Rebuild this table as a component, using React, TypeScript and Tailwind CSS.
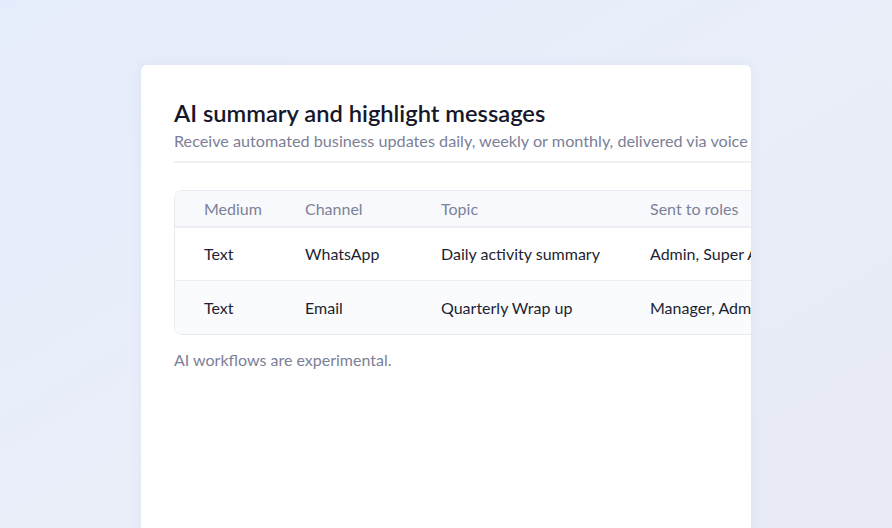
export default function App() {
  const rows = [
    { medium: "Text", channel: "WhatsApp", topic: "Daily activity summary", roles: "Admin, Super Admin", bg: "bg-white" },
    { medium: "Text", channel: "Email", topic: "Quarterly Wrap up", roles: "Manager, Admin", bg: "bg-[#fafbfd]" },
  ];
  return (
    <div
      className="w-[892px] h-[528px] overflow-hidden bg-gradient-to-br from-[#e5ecfb] via-[#e9eef9] to-[#e8eaf5] pt-[65px] pl-[141px]"
      style={{ fontFamily: "Lato, 'Noto Sans', sans-serif" }}
    >
      <div className="w-[610px] h-[480px] bg-white rounded-[6px] overflow-hidden pl-[33px] pt-[33px] shadow-[0_0_12px_rgba(120,130,180,0.08)]">
        <div className="w-[900px]">
          <h1 className="text-[23.7px] leading-[30px] font-semibold text-[#15172b] whitespace-nowrap">
            AI summary and highlight messages
          </h1>
          <p className="mt-[1px] text-[16.2px] leading-[24px] text-[#7b8098] whitespace-nowrap">
            Receive automated business updates daily, weekly or monthly, delivered via voice
          </p>
          <div className="mt-[8px] h-[2px] bg-[#eef0f4] w-[600px]" />
          <div className="mt-[27px] w-[720px] rounded-[8px] border border-[#e8eaf0] overflow-hidden">
            <div className="flex h-[37px] items-center bg-[#f8f9fc] border-b-2 border-[#eceef3] text-[16px] text-[#7b8199]">
              <div className="w-[130px] pl-[29px]">Medium</div>
              <div className="w-[136px]">Channel</div>
              <div className="w-[209px]">Topic</div>
              <div className="flex-1">Sent to roles</div>
            </div>
            {rows.map((r, i) => (
              <div
                key={i}
                className={`flex h-[53px] items-center text-[16px] text-[#1d1f33] ${r.bg} ${i === 0 ? "border-b border-[#eceef3]" : ""}`}
              >
                <div className="w-[130px] pl-[29px]">{r.medium}</div>
                <div className="w-[136px]">{r.channel}</div>
                <div className="w-[209px]">{r.topic}</div>
                <div className="flex-1 whitespace-nowrap">{r.roles}</div>
              </div>
            ))}
          </div>
          <p className="mt-[14px] text-[16px] leading-[22px] text-[#7b8098]">AI workflows are experimental.</p>
        </div>
      </div>
    </div>
  );
}
